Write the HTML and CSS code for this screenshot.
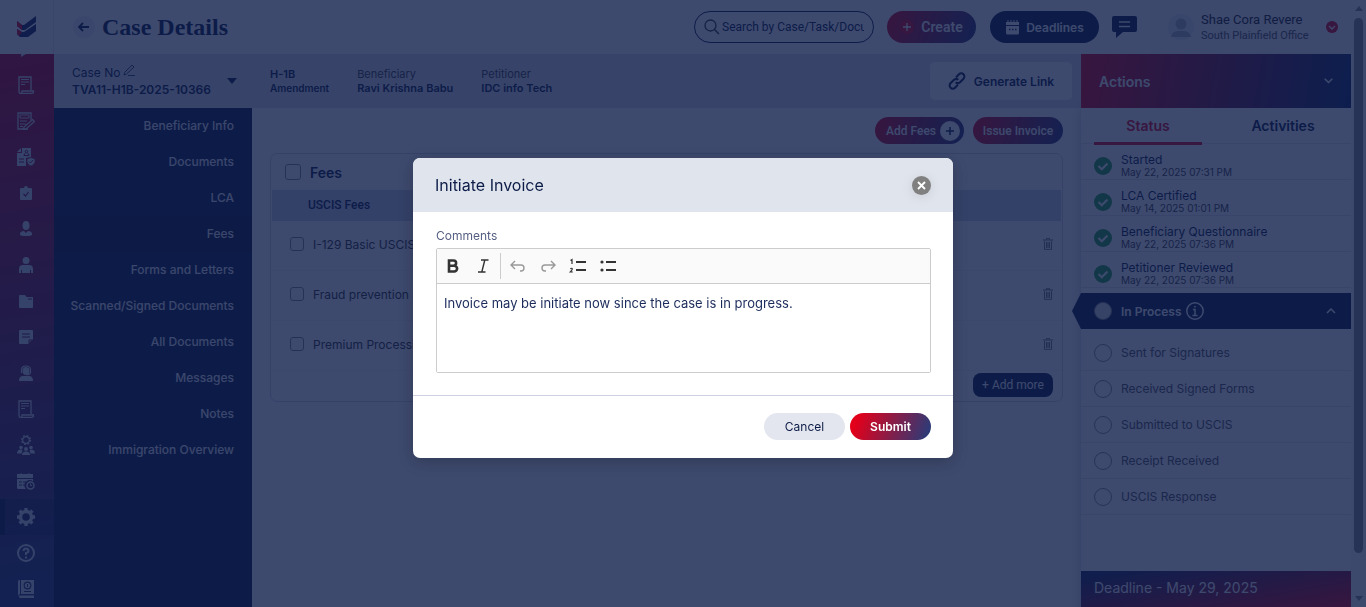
FILE: index.html
```html
<!DOCTYPE html>
<html lang="en">
<head>
  <meta charset="UTF-8">
  <meta name="viewport" content="width=device-width, initial-scale=1.0">
  <title>Case Details</title>
  <link rel="stylesheet" href="styles.css">
</head>
<body>
  <div class="app">
    <header class="topbar">
      <a class="logo" href="#" aria-label="Home">
        <svg width="20" height="22" viewBox="0 0 20 22">
          <path d="M0 5l5 4h2L19 0v6L8 14H5L0 10z" fill="#14245a"/><path d="M0 13l5 3h2l12-8v7l-8 6H3l-3-3z" fill="#14245a"/>
          <path d="M0 5l5 4v5L0 10zM0 13l5 3-3 4-2-2z" fill="#e2001a"/>
        </svg>
      </a>
      <button class="back" aria-label="Back">
        <svg width="12" height="10" viewBox="0 0 12 10"><path d="M11 5H1.500M5 1L1 5l4 4" fill="none" stroke="currentColor" stroke-width="1.800"/></svg>
      </button>
      <h1>Case Details</h1>
      <div class="search">
        <svg width="16" height="16" viewBox="0 0 16 16"><circle cx="6.500" cy="6.500" r="5.500" fill="none" stroke="currentColor" stroke-width="1.300"/><path d="M10.500 10.500L15 15" stroke="currentColor" stroke-width="1.500"/></svg>
        <input type="text" aria-label="Search" placeholder="Search by Case/Task/Document">
      </div>
      <button class="pill create">
        <svg width="14" height="14" viewBox="0 0 14 14"><circle cx="7" cy="7" r="7" fill="#e2001a"/><path d="M7 3v8M3 7h8" stroke="#fff" stroke-width="1.300"/></svg>
        Create
      </button>
      <button class="pill deadlines">
        <svg width="15" height="15" viewBox="0 0 15 15"><path d="M1 2h13v3H1zM1 6h13v7q0 1.500-1.500 1.500h-10Q1 14.500 1 13z" fill="#fff"/><path d="M3 0v3M6 0v3M9 0v3M12 0v3" stroke="#fff"/><path d="M4 9.500h1.500M7 9.500h1.500M10 9.500h1.500" stroke="#14245a" stroke-width="1.500"/></svg>
        Deadlines
      </button>
      <button class="chat" aria-label="Messages">
        <svg width="25" height="22" viewBox="0 0 25 22"><path d="M2 0h21q2 0 2 2v12q0 2-2 2H11l-7 6v-6H2q-2 0-2-2V2q0-2 2-2z" fill="#0c1c48"/><path d="M7 6h11M7 10.500h11" stroke="#fff" stroke-width="1.500"/></svg>
      </button>
      <div class="user">
        <svg width="26" height="26" viewBox="0 0 26 26"><circle cx="13" cy="13" r="13" fill="#eceef2"/><circle cx="13" cy="10" r="5.500" fill="#b3b7c1"/><path d="M3 23q1-6 7-6h6q6 0 7 6z" fill="#b3b7c1"/></svg>
        <div class="user-text">
          <span class="user-name">Shae Cora Revere</span>
          <span class="user-office">South Plainfield Office</span>
        </div>
        <button class="user-toggle" aria-label="Account menu">
          <svg width="12" height="12" viewBox="0 0 12 12"><circle cx="6" cy="6" r="6" fill="#e2001a"/><path d="M3 5l3 3 3-3" fill="none" stroke="#fff" stroke-width="1.300"/></svg>
        </button>
      </div>
    </header>

    <div class="layout">
      <nav class="rail" aria-label="Main">
        <a class="rail-item rail-first" href="#" aria-label="Play"><svg width="16" height="4" viewBox="0 0 16 4"><path d="M3 0h5L3 3z" fill="currentColor"/></svg></a>
        <a class="rail-item" href="#" aria-label="Cases"><svg width="18" height="18" viewBox="0 0 18 18"><use href="#i-scroll"/></svg></a>
        <a class="rail-item" href="#" aria-label="Forms"><svg width="18" height="18" viewBox="0 0 18 18"><path d="M14 8V1H1v16h10" fill="none" stroke="currentColor" stroke-width="1.300"/><path d="M3 3h9v3H3zM3 9h7M3 12h6M3 14.500h3" fill="none" stroke="currentColor"/><path d="M15.500 7.500l2 2L9 17l-3 1 1-3z" fill="none" stroke="currentColor" stroke-width="1.200"/></svg></a>
        <a class="rail-item" href="#" aria-label="Verified records"><svg width="18" height="18" viewBox="0 0 18 18"><path d="M5 0h9v9l-5 1v8H0V5h5z" fill="currentColor"/><path d="M0 4l4-4v4z" fill="currentColor"/><path d="M7 7.500h5q0-2-1.500-2.300M7 7.500q0-2 1.500-2.300M8.300 3.500a1.200 1.200 0 1 0 2.400 0 1.200 1.200 0 1 0-2.400 0M2 11h5M2 14h5" fill="none" stroke="#7e1440"/><path d="M10 11l4-1.500 4 1.500v3q-1 3-4 4-3-1-4-4z" fill="currentColor" stroke="#7e1440" stroke-width=".6"/><path d="M12 13.500l1.500 1.500 2.500-3" fill="none" stroke="#7e1440"/></svg></a>
        <a class="rail-item" href="#" aria-label="Tasks"><svg width="12" height="15" viewBox="0 0 12 15"><path d="M1 2h3q0-2 2-2t2 2h3q1 0 1 1v10q0 1-1 1H1q-1 0-1-1V3q0-1 1-1z" fill="currentColor"/><path d="M3.500 8l2 2 3-4" fill="none" stroke="#7e1440" stroke-width="1.200"/></svg></a>
        <a class="rail-item" href="#" aria-label="Beneficiaries"><svg width="14" height="16" viewBox="0 0 14 16"><ellipse cx="7" cy="4.500" rx="3.500" ry="4.500" fill="currentColor"/><path d="M1 13q0-3 4-3l2 2 2-2q4 0 4 3 1 2-6 2t-6-2z" fill="currentColor"/></svg></a>
        <a class="rail-item" href="#" aria-label="People"><svg width="14" height="16" viewBox="0 0 14 16"><circle cx="7" cy="3.500" r="3.500" fill="currentColor"/><path d="M0 16v-4q0-4 4-4h6q4 0 4 4v4h-2v-3h-1v3H3v-3H2v3z" fill="currentColor"/></svg></a>
        <a class="rail-item" href="#" aria-label="Folders"><svg width="14" height="13" viewBox="0 0 14 13"><path d="M1 0h5l1.500 2H14v10q0 1-1 1H1q-1 0-1-1V1q0-1 1-1z" fill="currentColor"/><path d="M9 4h4" stroke="#5e1c50"/></svg></a>
        <a class="rail-item" href="#" aria-label="Notes"><svg width="14" height="14" viewBox="0 0 14 14"><path d="M1 0h12q1 0 1 1v8l-5 5H1q-1 0-1-1V1q0-1 1-1z" fill="currentColor"/><path d="M3 4h8M3 7h8M10 13v-3h3" fill="none" stroke="#5e1c50"/></svg></a>
        <a class="rail-item" href="#" aria-label="Support"><svg width="14" height="16" viewBox="0 0 14 16"><path d="M0 16q0-5 4-5h6q4 0 4 5z" fill="currentColor"/><ellipse cx="7" cy="6" rx="3.500" ry="4" fill="currentColor"/><path d="M2.500 8V5q0-4 4.500-4t4.500 4v3q-1 2-4 2" fill="none" stroke="currentColor" stroke-width="1.200"/></svg></a>
        <a class="rail-item" href="#" aria-label="Reports"><svg width="18" height="18" viewBox="0 0 18 18"><use href="#i-scroll"/></svg></a>
        <a class="rail-item" href="#" aria-label="Team"><svg width="18" height="20" viewBox="0 0 18 20"><circle cx="9" cy="5" r="4.300" fill="none" stroke="currentColor" stroke-width="1.600" stroke-dasharray="1.700 1.677"/><circle cx="9" cy="5" r="3.300" fill="none" stroke="currentColor" stroke-width="1.200"/><circle cx="4" cy="12.500" r="1.800" fill="currentColor"/><circle cx="14" cy="12.500" r="1.800" fill="currentColor"/><circle cx="9" cy="14" r="2" fill="currentColor"/><path d="M0 18.500q0-4 4-4 1 0 1.500 1l-1 3zM18 18.500q0-4-4-4-1 0-1.500 1l1 3zM5 20q0-3.500 4-3.500t4 3.500z" fill="currentColor"/></svg></a>
        <a class="rail-item" href="#" aria-label="Schedule"><svg width="18" height="17" viewBox="0 0 18 17"><path d="M0 1h16v4H0zM0 6h16v2.500a4.700 4.700 0 0 0-7 7.500H1q-1 0-1-1z" fill="currentColor"/><path d="M4 0v2M12 0v2" stroke="currentColor"/><path d="M2 9h3M6 9h3M2 12h3M6 12h2" stroke="#3b2c60"/><circle cx="13.500" cy="12.500" r="3.500" fill="none" stroke="currentColor" stroke-width="1.500"/><path d="M13.500 10.500v2h1.500" fill="none" stroke="currentColor"/></svg></a>
        <a class="rail-item active" href="#" aria-label="Settings"><svg width="18" height="18" viewBox="0 0 18 18"><circle cx="9" cy="9" r="5.500" fill="none" stroke="currentColor" stroke-width="3.400"/><path d="M9 0v3M9 15v3M0 9h3M15 9h3M2.600 2.600l2.200 2.200M13.200 13.200l2.200 2.200M2.600 15.400l2.200-2.200M13.200 4.800l2.200-2.200" stroke="currentColor" stroke-width="3.400"/></svg></a>
        <a class="rail-item" href="#" aria-label="Help"><svg width="18" height="18" viewBox="0 0 18 18"><circle cx="9" cy="9" r="8" fill="none" stroke="currentColor" stroke-width="2"/><path d="M6.500 7q0-2.500 2.500-2.500T11.500 7Q11.500 8.500 9 9v2M9 12.500v2" fill="none" stroke="currentColor" stroke-width="2"/></svg></a>
        <a class="rail-item" href="#" aria-label="Guide"><svg width="16" height="18" viewBox="0 0 16 18"><path d="M0 1q0-1 2-1v14q-1 0-2 2zM3 0h13v14H3zM1 15.500h15V18H2q-1 0-1-2.500z" fill="currentColor"/><circle cx="9.500" cy="5.500" r="3.300" fill="none" stroke="#2b3468" stroke-width="1.200"/><path d="M9.500 4v3M6 11.500h7" stroke="#2b3468"/></svg></a>
      </nav>

      <div class="center">
        <section class="casebar">
          <button class="case-select">
            <span class="case-text">
              <span class="case-label">Case No
                <svg width="12" height="12" viewBox="0 0 12 12"><path d="M9 1l2 2-7.500 7L1 11l.7-2.700zM5 11.500h7" fill="none" stroke="currentColor" stroke-width=".8"/></svg>
              </span>
              <strong>TVA11-H1B-2025-10366</strong>
            </span>
            <svg width="10" height="6" viewBox="0 0 10 6"><path d="M0 0h10L5 6z" fill="currentColor"/></svg>
          </button>
          <dl class="case-facts">
            <div class="fact type"><dt>H-1B</dt><dd>Amendment</dd></div>
            <div class="fact"><dt>Beneficiary</dt><dd>Ravi Krishna Babu</dd></div>
            <div class="fact"><dt>Petitioner</dt><dd>IDC info Tech</dd></div>
          </dl>
          <button class="generate">
            <svg width="18" height="18" viewBox="0 0 18 18"><path d="M8 5.500l3-3.200a3 3 0 0 1 4.500 4.400L12 10.200a3 3 0 0 1-4.300 0M10 12.500l-3 3.200a3 3 0 0 1-4.500-4.400L6 7.800a3 3 0 0 1 4.300 0" fill="none" stroke="currentColor" stroke-width="2"/></svg>
            Generate Link
          </button>
        </section>

        <div class="workspace">
          <nav class="menu" aria-label="Case sections">
            <a href="#">Beneficiary Info</a>
            <a href="#">Documents</a>
            <a href="#">LCA</a>
            <a href="#" class="active">Fees</a>
            <a href="#">Forms and Letters</a>
            <a href="#">Scanned/Signed Documents</a>
            <a href="#">All Documents</a>
            <a href="#">Messages</a>
            <a href="#">Notes</a>
            <a href="#">Immigration Overview</a>
          </nav>
          <main class="content">
            <div class="content-actions">
              <button class="pill add-fees">Add Fees
                <svg width="20" height="20" viewBox="0 0 20 20"><circle cx="10" cy="10" r="10" fill="#fff"/><path d="M10 6v8M6 10h8" stroke="#0c1c48" stroke-width="1.500"/></svg>
              </button>
              <button class="pill issue">Issue Invoice</button>
            </div>
            <section class="card">
              <label class="card-head"><input type="checkbox"> Fees</label>
              <h2 class="card-sub">USCIS Fees</h2>
              <div class="fee">
                <label><input type="checkbox"> I-129 Basic USCIS</label>
                <button aria-label="Delete I-129 fee"><svg width="10" height="12" viewBox="0 0 10 12"><use href="#i-trash"/></svg></button>
              </div>
              <div class="fee">
                <label><input type="checkbox"> Fraud prevention</label>
                <button aria-label="Delete fraud prevention fee"><svg width="10" height="12" viewBox="0 0 10 12"><use href="#i-trash"/></svg></button>
              </div>
              <div class="fee">
                <label><input type="checkbox"> Premium Processing</label>
                <button aria-label="Delete premium processing fee"><svg width="10" height="12" viewBox="0 0 10 12"><use href="#i-trash"/></svg></button>
              </div>
              <div class="card-foot"><button class="add-more">+ Add more</button></div>
            </section>
          </main>
        </div>
      </div>

      <aside class="actions">
        <button class="actions-head">Actions
          <svg width="9" height="6" viewBox="0 0 9 6"><path d="M.7.7l3.800 3.800L8.300.7" fill="none" stroke="currentColor" stroke-width="1.500"/></svg>
        </button>
        <div class="tabs">
          <button class="tab active">Status</button>
          <button class="tab">Activities</button>
        </div>
        <ul class="steps">
          <li class="step done"><svg width="18" height="18" viewBox="0 0 18 18"><use href="#i-done"/></svg><div><b>Started</b><span>May 22, 2025 07:31 PM</span></div></li>
          <li class="step done"><svg width="18" height="18" viewBox="0 0 18 18"><use href="#i-done"/></svg><div><b>LCA Certified</b><span>May 14, 2025 01:01 PM</span></div></li>
          <li class="step done"><svg width="18" height="18" viewBox="0 0 18 18"><use href="#i-done"/></svg><div><b>Beneficiary Questionnaire</b><span>May 22, 2025 07:36 PM</span></div></li>
          <li class="step done"><svg width="18" height="18" viewBox="0 0 18 18"><use href="#i-done"/></svg><div><b>Petitioner Reviewed</b><span>May 22, 2025 07:36 PM</span></div></li>
          <li class="step current">
            <i class="ring"></i><b>In Process</b>
            <svg width="18" height="18" viewBox="0 0 18 18"><circle cx="9" cy="9" r="8.200" fill="none" stroke="currentColor" stroke-width="1.500"/><path d="M7 7.500h2v6M6.500 13.500h5M8.200 4.800h1.600" fill="none" stroke="currentColor" stroke-width="1.500"/></svg>
            <svg class="chevron" width="10" height="6" viewBox="0 0 10 6"><path d="M1 5l4-4 4 4" fill="none" stroke="currentColor" stroke-width="1.500"/></svg>
          </li>
          <li class="step"><i class="ring"></i><b>Sent for Signatures</b></li>
          <li class="step"><i class="ring"></i><b>Received Signed Forms</b></li>
          <li class="step"><i class="ring"></i><b>Submitted to USCIS</b></li>
          <li class="step"><i class="ring"></i><b>Receipt Received</b></li>
          <li class="step"><i class="ring"></i><b>USCIS Response</b></li>
        </ul>
        <div class="deadline">Deadline - May 29, 2025</div>
      </aside>
    </div>
  </div>

  <div class="scrollbar" aria-hidden="true">
    <i class="arrow-up"></i><i class="thumb"></i><i class="arrow-down"></i>
  </div>

  <div class="overlay">
    <form class="modal" role="dialog" aria-labelledby="modal-title">
      <div class="modal-head">
        <h2 id="modal-title">Initiate Invoice</h2>
        <button type="button" class="close" aria-label="Close">
          <svg width="9" height="9" viewBox="0 0 9 9"><path d="M1 1l7 7M8 1L1 8" stroke="currentColor" stroke-width="1.800"/></svg>
        </button>
      </div>
      <div class="modal-body">
        <label for="comments">Comments</label>
        <div class="editor">
          <div class="toolbar">
            <button type="button" aria-label="Bold"><svg width="20" height="20" viewBox="0 0 20 20"><path d="M6 4.500h4.500a2.600 2.600 0 0 1 0 5.200H6zM6 9.700h5.200a2.900 2.900 0 0 1 0 5.800H6z" fill="none" stroke="currentColor" stroke-width="2.600"/></svg></button>
            <button type="button" aria-label="Italic"><svg width="20" height="20" viewBox="0 0 20 20"><path d="M8 4h7.500M5 16h7.500M11.800 4l-3 12" fill="none" stroke="currentColor" stroke-width="1.400"/></svg></button>
            <i class="divider"></i>
            <button type="button" aria-label="Undo" disabled><svg width="20" height="20" viewBox="0 0 20 20"><path d="M7 5L3 9l4 4M3 9h10a3 3 0 0 1 3 3v0a3 3 0 0 1-3 3H12" fill="none" stroke="currentColor" stroke-width="1.400"/></svg></button>
            <button type="button" aria-label="Redo" disabled><svg width="20" height="20" viewBox="0 0 20 20"><path d="M13 5l4 4-4 4M17 9H7a3 3 0 0 0-3 3v0a3 3 0 0 0 3 3H8" fill="none" stroke="currentColor" stroke-width="1.400"/></svg></button>
            <button type="button" aria-label="Numbered list"><svg width="20" height="20" viewBox="0 0 20 20"><path d="M8 6h10M8 14h10" stroke="currentColor" stroke-width="1.800"/><path d="M2.500 4.500L4 3.500V8M2.300 12.800q1.700-1.200 2 .2 0 .8-2 3h2.500" fill="none" stroke="currentColor" stroke-width="1.200"/></svg></button>
            <button type="button" aria-label="Bulleted list"><svg width="20" height="20" viewBox="0 0 20 20"><path d="M8 6h10M8 14h10" stroke="currentColor" stroke-width="1.800"/><circle cx="4" cy="6" r="1.600" fill="currentColor"/><circle cx="4" cy="14" r="1.600" fill="currentColor"/></svg></button>
          </div>
          <textarea id="comments">Invoice may be initiate now since the case is in progress.</textarea>
        </div>
      </div>
      <div class="modal-foot">
        <button type="button" class="cancel">Cancel</button>
        <button type="submit" class="submit">Submit</button>
      </div>
    </form>
  </div>

  <!-- shared icons -->
  <svg class="sprite" width="0" height="0">
    <symbol id="i-scroll" viewBox="0 0 18 18"><path d="M14 14V1H2v15q0 1.300 1.500 1.300H15q1.500 0 1.500-2.300H5v1q0 1.300-1.500 1.300" fill="none" stroke="currentColor" stroke-width="1.300"/><path d="M4 3.500h8M4 6h8M4 8.500h4" stroke="currentColor"/></symbol>
    <symbol id="i-trash" viewBox="0 0 10 12"><path d="M0 2h10M3.500 2V.6h3V2M1.500 3v8.400h7V3M3.500 4v6M5 4v6M6.500 4v6" fill="none" stroke="currentColor"/></symbol>
    <symbol id="i-done" viewBox="0 0 18 18"><circle cx="9" cy="9" r="9" fill="#28a745"/><path d="M4.500 9l3.300 3.200L13.500 6.500" fill="none" stroke="#fff" stroke-width="2.200"/></symbol>
  </svg>
</body>
</html>
```
FILE: styles.css
```css
* {
  box-sizing: border-box;
}
body {
  margin: 0;
  height: 100vh;
  overflow: hidden;
  display: flex;
  background: #fff;
  color: #0c1c48;
  font-family: Inter, sans-serif;
  font-size: 12px;
}
button {
  font: inherit;
  color: inherit;
  background: none;
  border: none;
  padding: 0;
  cursor: pointer;
}
a {
  color: inherit;
  text-decoration: none;
}
h1, h2, ul, dl, dd {
  margin: 0;
  padding: 0;
}
svg {
  flex: none;
  display: block;
}
.sprite {
  position: absolute;
}
.app {
  flex: 1;
  min-width: 0;
  display: flex;
  flex-direction: column;
}

/* top bar */
.topbar {
  height: 54px;
  flex: none;
  display: flex;
  align-items: center;
  font-family: Roboto, sans-serif;
}
.logo {
  width: 54px;
  height: 54px;
  display: flex;
  align-items: center;
  justify-content: center;
  border-right: 1px solid #e8e8ee;
}
.back {
  width: 22px;
  height: 22px;
  margin: 0 7px 0 19px;
  border-radius: 50%;
  background: #eeeef2;
  display: flex;
  align-items: center;
  justify-content: center;
}
h1 {
  font: bold 24px "Liberation Serif", serif;
  margin-right: auto;
}
.search {
  width: 180px;
  height: 32px;
  padding: 0 9px;
  border: 1px solid #0c1c48;
  border-radius: 16px;
  display: flex;
  align-items: center;
  gap: 2px;
  color: #333;
}
.search input {
  flex: 1;
  min-width: 0;
  padding: 0;
  border: none;
  outline: none;
  background: none;
  font: 12px Roboto, sans-serif;
}
.search input::placeholder {
  color: #0c1c48;
}
.pill {
  display: flex;
  align-items: center;
  justify-content: center;
  color: #fff;
  border-radius: 16px;
  background: linear-gradient(110deg, #e2001a, #2b3b78);
  font-family: Roboto, sans-serif;
  font-weight: 500;
}
.create {
  height: 32px;
  width: 89px;
  gap: 7px;
  margin: 0 14px 0 13px;
  font-size: 14px;
  font-weight: 600;
}
.deadlines {
  height: 32px;
  width: 109px;
  gap: 6px;
  background: #0c1c48;
  font-family: Inter, sans-serif;
  font-weight: 600;
}
.chat {
  margin: 0 13px;
}
.user {
  width: 201px;
  height: 54px;
  padding: 0 13px 0 18px;
  display: flex;
  align-items: center;
  gap: 7px;
  background: #f7f7f7;
}
.user-text {
  flex: 1;
  display: flex;
  flex-direction: column;
}
.user-name {
  font-size: 13px;
  line-height: 16px;
  color: #222;
}
.user-office {
  font-size: 11px;
  line-height: 15px;
  color: #555;
}

/* icon rail */
.layout {
  flex: 1;
  min-height: 0;
  display: flex;
}
.rail {
  width: 54px;
  color: #d8dbe8;
  background: linear-gradient(170deg, #c00028, #2b3b78 95%);
}
.rail-item {
  height: 36px;
  padding-right: 2px;
  display: flex;
  align-items: center;
  justify-content: center;
}
.rail-first {
  height: 13px;
  align-items: flex-start;
}
.rail-item.active {
  background: rgba(12, 28, 72, 0.3);
  border-left: 5px solid #0c1c48;
  padding-right: 7px;
}

/* case bar */
.center {
  flex: 1;
  min-width: 0;
  display: flex;
  flex-direction: column;
}
.casebar {
  height: 54px;
  display: flex;
  align-items: center;
  padding-right: 9px;
  background: #e0e2e8;
}
.case-select {
  width: 198px;
  padding: 0 15px 0 18px;
  display: flex;
  align-items: center;
  justify-content: space-between;
  text-align: left;
}
.case-text strong {
  font-weight: 600;
  line-height: 17px;
}
.case-label {
  display: flex;
  gap: 3px;
  line-height: 17px;
}
.case-facts {
  display: flex;
  gap: 28px;
  padding-left: 18px;
  margin-right: auto;
}
.fact {
  font-size: 11px;
  line-height: 14px;
}
.fact dt {
  color: #444;
}
.fact dd {
  font-weight: 600;
}
.type dt {
  color: #0c1c48;
  font-weight: 600;
}
.type dd {
  font-size: 10px;
}
.generate {
  width: 142px;
  height: 38px;
  border-radius: 5px;
  background: #fff;
  font-weight: 600;
  display: flex;
  align-items: center;
  justify-content: center;
  gap: 8px;
}

/* section menu */
.workspace {
  flex: 1;
  min-height: 0;
  display: flex;
}
.menu {
  width: 198px;
  background: #0c1c48;
  color: #f0f0f4;
  font-weight: 500;
}
.menu a {
  display: block;
  height: 36px;
  line-height: 35px;
  padding-right: 18px;
  text-align: right;
}
.menu a.active {
  background: #0a1537;
}
.content {
  flex: 1;
  padding: 9px 18px;
}
.content-actions {
  display: flex;
  justify-content: flex-end;
  gap: 9px;
}
.add-fees, .issue {
  height: 27px;
  font-size: 12px;
}
.add-fees {
  width: 89px;
  gap: 4px;
  padding-left: 7px;
}
.issue {
  width: 90px;
}

/* fees */
.card {
  margin-top: 9px;
  border: 1px solid #d5d8e2;
  border-radius: 7px;
}
.card input {
  appearance: none;
  width: 14px;
  height: 14px;
  margin: 0;
  border: 1px solid #888;
  border-radius: 3px;
}
.card-head {
  height: 36px;
  padding-left: 14px;
  display: flex;
  align-items: center;
  gap: 9px;
  font-size: 14px;
  font-weight: 600;
}
.card-head input {
  width: 16px;
  height: 16px;
}
.card-sub {
  margin: 0 1px;
  padding-left: 36px;
  background: #cdd3e4;
  font: 500 12px/31px Roboto, sans-serif;
}
.fee {
  height: 50px;
  padding: 0 9px 3px 19px;
  display: flex;
  align-items: center;
  justify-content: space-between;
  border-bottom: 1px solid #f5f5f8;
  color: #333;
}
.fee label {
  display: flex;
  align-items: center;
  gap: 9px;
}
.fee button {
  color: #777;
}
.card-foot {
  padding: 2px 9px 4px;
  display: flex;
  justify-content: flex-end;
}
.add-more {
  width: 80px;
  height: 24px;
  border-radius: 8px;
  background: #0c1c48;
  color: #fff;
  font-family: Roboto, sans-serif;
}

/* actions panel */
.actions {
  width: 270px;
  display: flex;
  flex-direction: column;
  box-shadow: 0 54px 12px rgba(12, 28, 72, 0.2);
  background: #fff;
}
.actions-head {
  height: 54px;
  padding: 0 18px;
  display: flex;
  align-items: center;
  justify-content: space-between;
  color: #fff;
  background: linear-gradient(100deg, #e2001a, #0e2c66);
  font-size: 14px;
  font-weight: 600;
}
.tabs {
  display: flex;
  gap: 13px;
  height: 36px;
  padding-left: 13px;
  border-bottom: 1px solid #e3e3ea;
}
.tab {
  flex: 1;
  height: 37px;
  font-size: 14px;
  font-weight: 600;
  border-bottom: 3px solid transparent;
}
.tab.active {
  flex: none;
  width: 108px;
  color: #e2001a;
  border-color: #e2001a;
}
.steps {
  list-style: none;
}
.step {
  height: 36px;
  padding: 0 13px;
  display: flex;
  align-items: center;
  gap: 9px;
  color: #555;
  border-bottom: 1px solid #e3e3ea;
}
.step b {
  font-weight: 400;
}
.step.done {
  padding-top: 9px;
  color: #0c1c48;
}
.step.done b, .step.done span {
  display: block;
  line-height: 12px;
}
.step.done span {
  font-size: 10px;
  color: #444;
}
.ring {
  width: 18px;
  height: 18px;
  border: 1px solid #888;
  border-radius: 50%;
}
.step.current {
  margin: 5px 0 6px -9px;
  padding-left: 22px;
  padding-right: 15px;
  gap: 4px;
  border: none;
  color: #fff;
  background: #0c1c48;
  clip-path: polygon(9px 0, 100% 0, 100% 100%, 9px 100%, 0 50%);
}
.step.current b {
  font-weight: 600;
}
.step.current .ring {
  background: #ddd;
  margin-right: 5px;
}
.step .chevron {
  margin-left: auto;
}
.deadline {
  height: 36px;
  margin-top: auto;
  padding-left: 13px;
  line-height: 34px;
  font-size: 14px;
  color: #fff;
  background: linear-gradient(170deg, #0e2c66, #e2001a);
}

/* page scrollbar */
.scrollbar {
  width: 15px;
  flex: none;
  padding: 6px 0;
  display: flex;
  flex-direction: column;
  align-items: center;
  background: #fafafa;
}
.thumb {
  flex: 1;
  width: 9px;
  margin: 7px 0 43px;
  border-radius: 5px;
  background: #8b8b8b;
}
.arrow-up, .arrow-down {
  border: 4px solid transparent;
  border-top-width: 0;
  border-bottom: 5px solid #8b8b8b;
}
.arrow-down {
  border-bottom-width: 0;
  border-top: 5px solid #8b8b8b;
}

/* dialog */
.overlay {
  position: fixed;
  inset: 0;
  padding-top: 9px;
  display: flex;
  align-items: center;
  justify-content: center;
  background: rgba(12, 28, 72, 0.8);
}
.modal {
  width: 540px;
  border-radius: 7px;
  overflow: hidden;
  background: #fff;
  box-shadow: 0 4px 16px rgba(0, 0, 0, 0.2);
}
.modal-head {
  height: 54px;
  padding: 0 22px;
  display: flex;
  align-items: center;
  justify-content: space-between;
  background: #e0e4ed;
}
.modal-head h2 {
  font-size: 16px;
  font-weight: 400;
}
.close {
  width: 19px;
  height: 19px;
  border-radius: 50%;
  background: #808080;
  color: #fff;
  display: flex;
  align-items: center;
  justify-content: center;
  box-shadow: 0 2px 12px rgba(0, 0, 0, 0.1);
}
.modal-body {
  padding: 16px 22px 22px 23px;
}
.modal-body label {
  display: block;
  line-height: 16px;
  color: #555f83;
}
.editor {
  margin-top: 4px;
  border: 1px solid #ccc;
  border-radius: 2px;
}
.toolbar {
  height: 35px;
  padding: 0 6px;
  display: flex;
  align-items: center;
  gap: 10px;
  color: #333;
  background: #fafafa;
  border-bottom: 1px solid #ccc;
}
.toolbar button:disabled {
  color: #999;
}
.divider {
  width: 1px;
  height: 26px;
  margin: 0 -3px;
  background: #ccc;
}
textarea {
  display: block;
  width: 100%;
  height: 88px;
  padding: 10px 7px;
  border: none;
  outline: none;
  resize: none;
  color: #1b2b5b;
  font: 13px/18px Inter, sans-serif;
}
.modal-foot {
  padding: 17px 22px 18px;
  display: flex;
  justify-content: flex-end;
  gap: 5px;
  border-top: 1px solid #ccd0e2;
}
.cancel, .submit {
  width: 81px;
  height: 27px;
  border-radius: 14px;
  background: #e3e6ee;
}
.submit {
  color: #fff;
  font-weight: 600;
  background: linear-gradient(110deg, #e2001a 10%, #2b3b78 95%);
}
```
